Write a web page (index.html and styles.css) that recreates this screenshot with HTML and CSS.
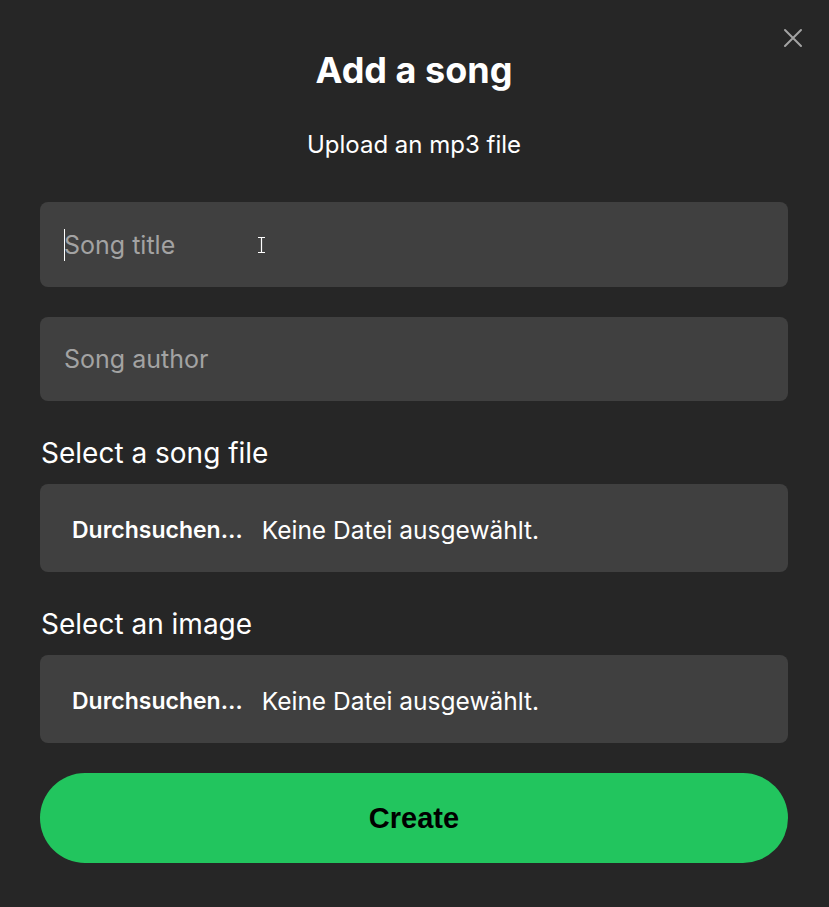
FILE: index.html
```html
<!DOCTYPE html>
<html lang="en">
<head>
<meta charset="utf-8">
<title>Add a song</title>
<link rel="stylesheet" href="styles.css">
</head>
<body>
<div class="modal">
  <button class="close" aria-label="Close">
    <svg width="20" height="20" viewBox="0 0 20 20"><path d="M2 2 L18 18 M18 2 L2 18" stroke="#a3a3a3" stroke-width="2" stroke-linecap="round"/></svg>
  </button>
  <h1 class="title">Add a song</h1>
  <p class="subtitle">Upload an mp3 file</p>
  <form class="form">
    <div class="field focused">
      <input class="text-input" type="text" placeholder="Song title">
      <span class="caret"></span>
      <svg class="ibeam" width="9" height="18" viewBox="0 0 9 18"><path d="M1 1.5 H8 M1 16.5 H8 M4.5 1.5 V16.5" stroke="#fff" stroke-width="1.2" fill="none"/></svg>
    </div>
    <div class="field">
      <input class="text-input short" type="text" placeholder="Song author">
    </div>
    <div class="group">
      <div class="label">Select a song file</div>
      <div class="file"><span class="file-btn">Durchsuchen…</span><span class="file-name">Keine Datei ausgewählt.</span></div>
    </div>
    <div class="group">
      <div class="label">Select an image</div>
      <div class="file"><span class="file-btn">Durchsuchen…</span><span class="file-name">Keine Datei ausgewählt.</span></div>
    </div>
    <button class="create" type="button">Create</button>
  </form>
</div>
</body>
</html>
```
FILE: styles.css
```css
* { box-sizing: border-box; }
html, body { margin: 0; padding: 0; }
body {
  background: #262626;
  font-family: "Inter", "Open Sans", sans-serif;
  color: #fff;
}
.modal {
  position: relative;
  width: 829px;
  height: 907px;
  padding: 48px 41px 0 40px;
}
.close {
  position: absolute;
  top: 28px;
  right: 26px;
  width: 20px;
  height: 20px;
  padding: 0;
  border: 0;
  background: none;
  display: flex;
}
.title {
  margin: 0;
  text-align: center;
  font-size: 36px;
  line-height: 44px;
  font-weight: 700;
}
.subtitle {
  margin: 39px 0 0;
  text-align: center;
  font-size: 24px;
  line-height: 28px;
}
.form {
  margin-top: 43px;
  display: flex;
  flex-direction: column;
  gap: 30px;
}
.field { position: relative; }
.text-input {
  display: block;
  width: 100%;
  height: 85px;
  border: 0;
  border-radius: 8px;
  background: #404040;
  padding: 0 24px;
  font-family: inherit;
  font-size: 25px;
  color: #fff;
  outline: none;
}
.text-input.short { height: 84px; }
.text-input::placeholder { color: #a3a3a3; }
.caret {
  position: absolute;
  left: 24px;
  top: 27px;
  width: 1px;
  height: 32px;
  background: #fff;
}
.ibeam {
  position: absolute;
  left: 217px;
  top: 34px;
}
.group { display: flex; flex-direction: column; }
.label {
  font-size: 28px;
  line-height: 40px;
  padding-top: 2px;
  margin-bottom: 11px;
  padding-left: 1px;
}
.file {
  height: 88px;
  border-radius: 8px;
  background: #404040;
  display: flex;
  align-items: center;
  padding: 3px 0 0 32px;
  font-size: 24.5px;
}
.file-btn { font-size: 23px; font-weight: 600; margin-right: 19px; }
.create {
  height: 90px;
  border: 0;
  border-radius: 45px;
  background: #22c55e;
  color: #000;
  font-family: "Liberation Sans", Arial, sans-serif;
  font-weight: 700;
  font-size: 29px;
}
```
